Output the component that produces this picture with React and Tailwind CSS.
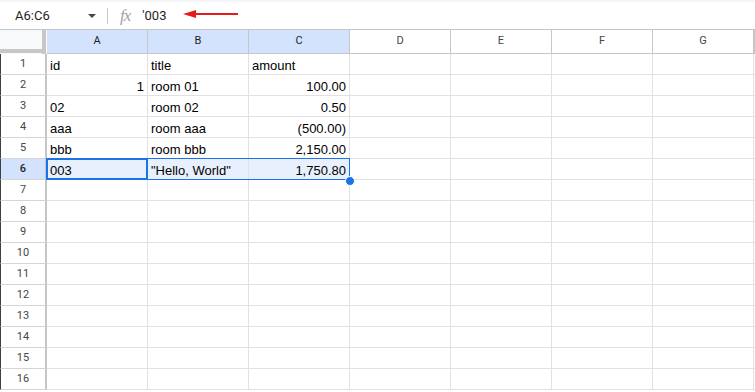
import React from "react";

const COLS = ["A", "B", "C", "D", "E", "F", "G"];
const DATA = [
  [{ t: "id" }, { t: "title" }, { t: "amount" }],
  [{ t: "1", r: true }, { t: "room 01" }, { t: "100.00", r: true }],
  [{ t: "02" }, { t: "room 02" }, { t: "0.50", r: true }],
  [{ t: "aaa" }, { t: "room aaa" }, { t: "(500.00)", r: true }],
  [{ t: "bbb" }, { t: "room bbb" }, { t: "2,150.00", r: true }],
  [{ t: "003" }, { t: "\"Hello, World\"" }, { t: "1,750.80", r: true }],
];

function FormulaBar() {
  return (
    <div className="h-[30px] flex flex-col">
      <div className="h-[2px] bg-[#f3f5f7]" />
      <div className="flex-1 flex items-center border-b border-[#c4c7c5] bg-white">
        <div className="w-[107px] flex items-center pl-[15px] pr-[11px]">
          <span className="flex-1 text-[13px] text-[#1f1f1f] font-['Roboto',sans-serif]">A6:C6</span>
          <svg width="8" height="4" viewBox="0 0 8 4" className="mt-[1px]">
            <path d="M0 0 L8 0 L4 4 Z" fill="#444746" />
          </svg>
        </div>
        <div className="w-px h-[16px] bg-[#c4c7c5]" />
        <span className="ml-[12px] text-[17px] italic text-[#a0a4a8] font-['Liberation_Serif',serif] leading-none tracking-[-1px]">fx</span>
        <span className="ml-[12px] text-[13px] text-[#1f1f1f] font-['Roboto',sans-serif]">'003</span>
        <svg width="56" height="10" viewBox="0 0 56 10" className="ml-[17px] mb-[4px]">
          <line x1="10" y1="5" x2="55" y2="5" stroke="#e51b1b" strokeWidth="2" />
          <path d="M0 5 L13 1 L13 9 Z" fill="#e51b1b" />
        </svg>
      </div>
    </div>
  );
}

function HeaderRow() {
  return (
    <div className="flex h-[24px]">
      <div className="w-[47px] shrink-0 relative bg-[#f8f9fa]">
        <div className="absolute right-[1px] top-0 bottom-0 w-[4px] bg-[#c7c7c7]" />
        <div className="absolute left-0 right-[1px] bottom-[1px] h-[4px] bg-[#c7c7c7]" />
      </div>
      {COLS.map((c, i) => (
        <div
          key={c}
          className={
            "w-[101px] shrink-0 flex items-center justify-center border-r border-b border-[#c4c7c5] text-[11px] font-['Roboto',sans-serif] " +
            (i < 3 ? "bg-[#d3e3fd] text-[#1f1f1f]" : "bg-white text-[#444746]")
          }
        >
          {c}
        </div>
      ))}
      <div className="flex-1 border-b border-l border-[#c4c7c5]" />
    </div>
  );
}

function Row({ n, cells }) {
  const sel = n === 6;
  return (
    <div className="flex h-[21px]">
      <div
        className={
          "w-[47px] shrink-0 flex items-center justify-center border-l border-[#3c4043] border-r-2 border-r-[#c4c7c5] border-b border-b-[#d5d5d5] text-[11px] font-['Roboto',sans-serif] " +
          (sel ? "bg-[#d3e3fd] text-[#1f1f1f] font-medium" : "bg-white text-[#444746]")
        }
      >
        {n}
      </div>
      {COLS.map((c, i) => {
        const cell = cells && cells[i];
        return (
          <div
            key={c}
            className={
              "w-[101px] shrink-0 flex items-end px-[3px] border-r border-b border-[#e1e1e1] text-[13px] leading-[16px] text-black font-['Liberation_Sans',Arial,sans-serif] whitespace-nowrap overflow-hidden " +
              (cell && cell.r ? "justify-end " : "justify-start ") +
              (sel && i < 3 ? "bg-[#e8f0fd]" : "bg-white")
            }
          >
            {cell ? cell.t : ""}
          </div>
        );
      })}
      <div className="flex-1 border-b border-[#e1e1e1]" />
    </div>
  );
}

export default function App() {
  const rows = Array.from({ length: 16 }, (_, i) => i + 1);
  return (
    <div className="w-[755px] h-[392px] overflow-hidden bg-white">
      <FormulaBar />
      <div className="relative">
        <HeaderRow />
        {rows.map((n) => (
          <Row key={n} n={n} cells={DATA[n - 1]} />
        ))}
        <div className="absolute left-[46px] top-[128px] w-[304px] h-[22px] border border-[#1a73e8] pointer-events-none" />
        <div className="absolute left-[46px] top-[128px] w-[102px] h-[22px] border-2 border-[#1a73e8] pointer-events-none" />
        <div className="absolute left-[345px] top-[146px] w-[8px] h-[8px] rounded-full bg-[#1a73e8] border border-white box-content" />
      </div>
    </div>
  );
}
